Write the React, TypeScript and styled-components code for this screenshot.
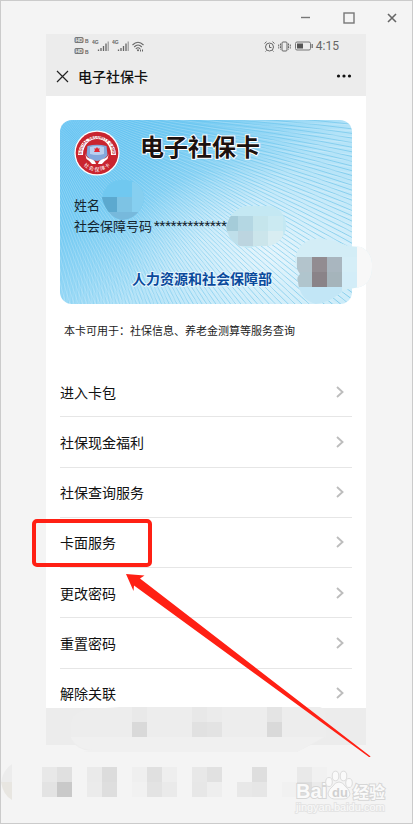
import React from "react";
import styled, { createGlobalStyle } from "styled-components";

const cjk = '"Noto Sans CJK SC", "Noto Sans", sans-serif';
const red = "#ff2014";

const GlobalStyle = createGlobalStyle`
  *, *::after { box-sizing: border-box; }
  body { margin: 0; background: #f4f4f4; font-family: ${cjk}; color: #111; }
  button { border: 0; padding: 0; background: none; font: inherit; color: inherit; cursor: pointer; }
  svg { display: block; flex: none; }
`;

const Frame = styled.div`
  position: relative;
  display: flex;
  flex-direction: column;
  min-height: 100vh;
  border: 1px solid #cbcbcb;
  background: #f4f4f4;
  overflow: hidden;
`;

const TitleBar = styled.div`
  display: flex;
  justify-content: flex-end;
  align-items: center;
  gap: 23px;
  height: 33px;
  padding-right: 10px;
`;

const WindowButton = styled.button`
  display: grid;
  place-items: center;
  width: 20px;
  height: 20px;
`;

const Phone = styled.main`
  margin: 0 46px 0 45px;
  background: #fff;
`;

const TopBar = styled.header`
  background: #ececec;
`;

const StatusBar = styled.div`
  display: flex;
  align-items: center;
  justify-content: space-between;
  height: 24px;
  padding: 0 27px 0 28px;
`;

const StatusGroup = styled.div`
  display: flex;
  align-items: center;
  gap: 3px;
  font: 12px/24px Roboto, sans-serif;
  color: #666;
`;

const NavBar = styled.nav`
  display: flex;
  align-items: center;
  gap: 9px;
  height: 38px;
  padding: 0 14px 2px 10px;
`;

const NavTitle = styled.h1`
  flex: 1;
  margin: 0;
  font-size: 14px;
  line-height: 20px;
  font-weight: 500;
`;

const Body = styled.div`
  padding: 24px 14px 0;
`;

const Card = styled.section`
  position: relative;
  isolation: isolate;
  padding: 10px 14px 16px;
`;

const CardArt = styled.svg`
  position: absolute;
  inset: 0;
  z-index: -1;
  width: 100%;
  height: 100%;
  border-radius: 12px;
`;

const CardHead = styled.div`
  display: flex;
  align-items: center;
  gap: 20px;
  height: 46px;
  margin-bottom: 18px;
`;

const CardTitle = styled.h2`
  margin: 0;
  align-self: flex-start;
  font-size: 24px;
  line-height: 32px;
  font-weight: 700;
  color: #1c1210;
  paint-order: stroke fill;
  -webkit-text-stroke: 2px #fff;
`;

const CardLine = styled.div`
  display: flex;
  gap: 2px;
  font-size: 13px;
  line-height: 21px;
  color: #14242e;
`;

const Masked = styled.span`
  font-family: Roboto, sans-serif;
`;

const Issuer = styled.div`
  margin-top: 32px;
  padding-right: 8px;
  font-size: 14px;
  line-height: 20px;
  font-weight: 700;
  text-align: center;
  color: #0a4a9c;
  paint-order: stroke fill;
  -webkit-text-stroke: 2px #e6f6fd;
`;

const Smudge = styled.svg<{ $left?: number; $right?: number; $top: number }>`
  position: absolute;
  top: ${(p) => p.$top}px;
  ${(p) => (p.$right !== undefined ? `right: ${p.$right}px;` : `left: ${p.$left}px;`)}
`;

const Note = styled.p`
  margin: 16px 0 27px;
  padding-left: 4px;
  font-size: 11px;
  line-height: 20px;
  color: #222;
`;

const Menu = styled.ul`
  display: grid;
  grid-auto-rows: 1fr;
  min-height: 352px;
  margin: 0;
  padding: 0;
  list-style: none;
`;

const MenuItem = styled.li<{ $marked?: boolean }>`
  position: relative;
  border-bottom: 1px solid #e6e6e6;
  ${(p) =>
    p.$marked &&
    `&::after {
      content: "";
      position: absolute;
      inset: 1px auto 0 -28px;
      width: 120px;
      border: 4px solid ${red};
      border-radius: 5px;
      pointer-events: none;
    }`}
`;

const MenuButton = styled.button`
  display: flex;
  align-items: center;
  justify-content: space-between;
  width: 100%;
  height: 100%;
  padding-right: 8px;
  font-size: 14px;
  line-height: 20px;
  text-align: left;
`;

const Footer = styled.footer`
  position: relative;
  height: 37px;
  margin-top: -11px;
  background: #ececec;
`;

const FooterSmudge = styled.svg`
  position: absolute;
  top: -1px;
  left: 24px;
`;

const Dock = styled.div`
  display: flex;
  align-items: flex-start;
  justify-content: space-between;
  padding: 18px 27px 10px 0;
`;

const Watermark = styled.svg`
  position: absolute;
  right: 24px;
  bottom: 6px;
`;

const Arrow = styled.svg`
  position: absolute;
  top: 572px;
  left: 125px;
  pointer-events: none;
`;

const fan = (ox: number, oy: number, from: number, to: number, step: number, bend: number) => {
  let d = "";
  for (let a = from; a < to; a += step) {
    const c = Math.cos(a);
    const s = Math.sin(a);
    const mx = ox + c * 190 - s * bend;
    const my = oy + s * 190 + c * bend;
    d += `M${(ox + c * 40).toFixed(1)} ${(oy + s * 40).toFixed(1)}Q${mx.toFixed(1)} ${my.toFixed(1)} ${(ox + c * 400).toFixed(1)} ${(oy + s * 400).toFixed(1)}`;
  }
  return d;
};

const Guilloche = () => (
  <CardArt viewBox="0 0 292 184" preserveAspectRatio="none" aria-hidden="true">
    <defs>
      <linearGradient id="sky" x1="0" y1="0" x2="1" y2="0.8">
        <stop offset="0" stopColor="#5cc0f2" />
        <stop offset="0.3" stopColor="#76cbf3" />
        <stop offset="0.62" stopColor="#b4e3f8" />
        <stop offset="1" stopColor="#c2e8f8" />
      </linearGradient>
      <radialGradient id="glow" cx="0.72" cy="0.72" r="0.5">
        <stop offset="0" stopColor="#fff" stopOpacity="0.6" />
        <stop offset="1" stopColor="#fff" stopOpacity="0" />
      </radialGradient>
      <linearGradient id="ink" x1="0" y1="0" x2="1" y2="0.5">
        <stop offset="0.15" stopColor="#4fb8e6" stopOpacity="0" />
        <stop offset="0.5" stopColor="#4fb8e6" stopOpacity="0.4" />
        <stop offset="1" stopColor="#4ab2dc" stopOpacity="0.65" />
      </linearGradient>
    </defs>
    <rect width="292" height="184" fill="url(#sky)" />
    <rect width="292" height="184" fill="url(#glow)" />
    <path d={fan(10, -12, -0.05, 1.7, 0.016, -14)} fill="none" stroke="url(#ink)" strokeWidth="1" />
    <path d={fan(-40, -30, 0.05, 1.5, 0.018, 22)} fill="none" stroke="#fff" strokeOpacity="0.2" strokeWidth="1" />
  </CardArt>
);

const Seal = () => (
  <svg width="46" height="46" viewBox="0 0 46 46" role="img" aria-label="社会保障卡">
    <defs>
      <path id="sealTop" d="M8.500 29A15.400 15.400 0 1 1 37.500 29" />
      <path id="sealBottom" d="M5.600 29A18.600 18.600 0 0 0 40.400 29" />
    </defs>
    <circle cx="23" cy="23" r="22.600" fill="#fff" />
    <circle cx="23" cy="23" r="21.300" fill="#c9242f" />
    <path d="M4 25A19 19 0 1 1 42 25H37A14 14 0 1 0 9 25Z" fill="#fff" />
    <circle cx="23" cy="22.500" r="13.500" fill="#c9242f" />
    <text fontFamily="Liberation Sans, sans-serif" fontSize="4" fontWeight="700" fill="#b8232e">
      <textPath href="#sealTop" startOffset="50%" textAnchor="middle">SOCIAL SECURITY CARD</textPath>
    </text>
    <text fontFamily="Noto Sans CJK SC, sans-serif" fontSize="5" fill="#fff">
      <textPath href="#sealBottom" startOffset="50%" textAnchor="middle">社 会 保 障 卡</textPath>
    </text>
    <path d="M13.500 16Q23 13.500 32.500 16L33.500 25Q31 30 23 31Q15 30 12.500 25Z" fill="#83a8dc" />
    <path d="M16 17Q23 15 30 17L30 24Q23 26 16 24Z" fill="#b9d0f0" />
    <path d="M11 23Q12 28 17 29Q21 30 22 34H18Q16 31 12.500 29ZM35 23Q34 28 29 29Q25 30 24 34H28Q30 31 33.500 29Z" fill="#fff" />
    <path d="M23 17L24 18.600L26 18.400L25 20L26 22H20L21 20L20 18.400L22 18.600Z" fill="#e32832" />
  </svg>
);

const blocks = (cells: [number, number, string][]) =>
  cells.map(([x, y, c]) => <rect key={`${x}-${y}`} x={x} y={y} width="15" height="15" fill={c} />);

const Signal = () => (
  <svg width="17" height="14" viewBox="0 0 17 14" aria-hidden="true">
    <text x="0" y="5" fontFamily="Liberation Sans, sans-serif" fontSize="5" fontWeight="700" fill="#666">4G</text>
    <path d="M6.500 12v-1.500M9 12V9M11.500 12V7M14 12V4.500" stroke="#666" strokeWidth="1.300" />
    <path d="M16.200 12V2.500" stroke="#999" strokeWidth="1.200" />
  </svg>
);

const Chevron = () => (
  <svg width="8" height="12" viewBox="0 0 8 12" aria-hidden="true">
    <path d="M1 1L6.500 6L1 11" fill="none" stroke="#bdbdbd" strokeWidth="1.900" />
  </svg>
);

const items = ["进入卡包", "社保现金福利", "社保查询服务", "卡面服务", "更改密码", "重置密码", "解除关联"];

export default function App() {
  return (
    <>
      <GlobalStyle />
      <Frame>
        <TitleBar>
          <WindowButton aria-label="最小化">
            <svg width="10" height="10"><path d="M0 4.500H9" stroke="#777" strokeWidth="1.400" /></svg>
          </WindowButton>
          <WindowButton aria-label="最大化">
            <svg width="12" height="12"><rect x="1" y="1" width="10" height="10" fill="none" stroke="#777" strokeWidth="1.400" /></svg>
          </WindowButton>
          <WindowButton aria-label="关闭">
            <svg width="10" height="10"><path d="M1 1L9 9M9 1L1 9" stroke="#666" strokeWidth="1.600" /></svg>
          </WindowButton>
        </TitleBar>

        <Phone>
          <TopBar>
            <StatusBar>
              <StatusGroup>
                <svg width="15" height="20" viewBox="0 0 15 20" aria-hidden="true">
                  <rect x="0.500" y="1" width="9" height="6" rx="1.500" fill="#777" />
                  <rect x="0.500" y="12" width="9" height="6" rx="1.500" fill="#777" />
                  <g fontFamily="Liberation Sans, sans-serif" fontSize="5" fontWeight="700">
                    <text x="1.500" y="6" fill="#eee">HD</text>
                    <text x="1.500" y="17" fill="#eee">HD</text>
                    <text x="11" y="7" fill="#666">B</text>
                    <text x="11" y="18" fill="#666">B</text>
                  </g>
                </svg>
                <Signal />
                <Signal />
                <svg width="12" height="11" viewBox="0 0 12 11" aria-hidden="true">
                  <g fill="none" stroke="#666" strokeWidth="1.100">
                    <path d="M0.500 4Q6 -1.500 11.500 4" />
                    <path d="M2.200 6Q6 2 9.800 6" />
                    <path d="M3.800 8Q6 5.500 8.200 8" />
                  </g>
                  <circle cx="6" cy="9.300" r="1" fill="#666" />
                  <path d="M8.500 8.500V10.500M10.500 8.500V10.500" stroke="#666" />
                </svg>
              </StatusGroup>
              <StatusGroup>
                <svg width="11" height="11" viewBox="0 0 11 11" fill="none" stroke="#666" aria-hidden="true">
                  <circle cx="5.500" cy="6" r="4" />
                  <path d="M5.500 3.500V6.500H7.500M0.500 2.500L2.500 0.700M10.500 2.500L8.500 0.700M2.500 9.500L1.500 10.500M8.500 9.500L9.500 10.500" />
                </svg>
                <svg width="13" height="11" viewBox="0 0 13 11" fill="none" stroke="#666" aria-hidden="true">
                  <rect x="4" y="1" width="5" height="9" rx="1" />
                  <path d="M2.500 2.500V8.500M10.500 2.500V8.500M0.700 3.500V7.500M12.300 3.500V7.500" strokeDasharray="2 0.700" />
                </svg>
                <svg width="19" height="10" viewBox="0 0 19 10" aria-hidden="true">
                  <rect x="1.500" y="1" width="15" height="8" rx="1.500" fill="none" stroke="#777" />
                  <rect x="3" y="2.500" width="6" height="5" fill="#555" />
                  <path d="M18.200 3V7" stroke="#666" strokeWidth="1.200" />
                </svg>
                <span>4:15</span>
              </StatusGroup>
            </StatusBar>
            <NavBar>
              <button aria-label="关闭页面">
                <svg width="13" height="13"><path d="M1 1L12 12M12 1L1 12" stroke="#222" strokeWidth="1.200" /></svg>
              </button>
              <NavTitle>电子社保卡</NavTitle>
              <button aria-label="更多">
                <svg width="16" height="6" fill="#111"><circle cx="2.500" cy="3" r="1.600" /><circle cx="8" cy="3" r="1.600" /><circle cx="13.500" cy="3" r="1.600" /></svg>
              </button>
            </NavBar>
          </TopBar>

          <Body>
            <Card>
              <Guilloche />
              <CardHead>
                <Seal />
                <CardTitle>电子社保卡</CardTitle>
              </CardHead>
              <CardLine>姓名</CardLine>
              <CardLine>
                <span>社会保障号码</span>
                <Masked>*************</Masked>
              </CardLine>
              <Issuer>人力资源和社会保障部</Issuer>

              <Smudge $left={41} $top={59} width="44" height="42" aria-hidden="true">
                <clipPath id="blobName"><path d="M1 19Q3 6 14 2Q30 -2 39 8Q47 18 40 29Q34 40 21 41Q6 38 1 19Z" /></clipPath>
                <g clipPath="url(#blobName)">
                  <rect width="44" height="42" fill="#70c8f0" />
                  <rect x="31" y="3" width="13" height="39" fill="#86cff0" />
                  <rect y="18" width="16" height="15" fill="#5ca9cf" />
                  <rect x="16" y="18" width="15" height="15" fill="#7dc3e4" />
                  <rect y="33" width="44" height="9" fill="#77b9dc" />
                </g>
              </Smudge>
              <Smudge $left={166} $top={85} width="61" height="44" aria-hidden="true">
                <clipPath id="blobNumber"><path d="M0 22Q5 4 20 1H45Q61 6 60 23Q57 38 42 41Q30 40 24 43Q4 42 0 22Z" /></clipPath>
                <g clipPath="url(#blobNumber)">
                  <rect width="61" height="44" fill="#c4e8f3" />
                  {blocks([[-3, 11, "#a5ccd9"], [12, 11, "#b4d7e3"], [27, 11, "#c5e5ec"], [42, 11, "#cbeaf2"], [-3, 26, "#bfdfea"], [12, 26, "#bcd5e0"], [27, 26, "#cbe5eb"], [42, 26, "#d8edf2"]])}
                </g>
              </Smudge>
              <Smudge $right={-20} $top={116} width="77" height="68" aria-hidden="true">
                <clipPath id="blobCode"><path d="M0 24Q2 4 25 2Q42 5 53 10L66 11Q78 17 77 31Q77 47 65 51L49 54Q36 66 21 68Q5 64 3 46Q1 42 5 38Q1 33 0 24Z" /></clipPath>
                <g clipPath="url(#blobCode)">
                  <rect width="77" height="68" fill="#d3edf6" />
                  <rect x="62" width="15" height="68" fill="#f8f8f8" />
                  <rect y="51" width="47" height="17" fill="#c2e6f6" />
                  {blocks([[2, 21, "#b3c4cc"], [17, 21, "#928c91"], [32, 21, "#a9b6bf"], [2, 36, "#b0c5cd"], [17, 36, "#8a8388"], [32, 36, "#a5b4bb"], [47, 21, "#d5eef7"], [47, 36, "#d3edf8"]])}
                </g>
              </Smudge>
            </Card>
            <Note>本卡可用于：社保信息、养老金测算等服务查询</Note>
            <Menu>
              {items.map((label) => (
                <MenuItem key={label} $marked={label === "卡面服务"}>
                  <MenuButton>
                    {label}
                    <Chevron />
                  </MenuButton>
                </MenuItem>
              ))}
            </Menu>
          </Body>
          <Footer>
            <FooterSmudge width="256" height="46" aria-hidden="true">
              <path d="M1 20Q0 5 20 2L50 0H250Q256 1 256 12V30L227 45H14L22 44Q6 43 1 32Z" fill="#ededed" />
              <path d="M1 30H254L227 45H14L22 43Q6 42 1 30Z" fill="#f0f0f0" />
              {blocks([[62, 0, "#e9e9e9"], [62, 15, "#d9d9d9"], [122, 0, "#e8e8e8"], [137, 0, "#ebebeb"], [122, 15, "#e1e1e1"], [137, 15, "#e3e3e3"], [197, 0, "#e4e4e4"], [197, 15, "#d9d9d9"]])}
            </FooterSmudge>
          </Footer>
        </Phone>

        <Dock>
          <svg width="330" height="42" aria-hidden="true">
            <path d="M11 1Q2 7 0 19H11Z" fill="#ececec" />
            <path d="M0 19H11V37Q2 32 0 19Z" fill="#e8e6e1" />
            {blocks([
              [41, 4, "#e8e8e8"], [56, 4, "#e0e0e0"], [41, 19, "#e3e3e3"], [56, 19, "#c9c9c9"],
              [86, 4, "#eaeaea"], [101, 4, "#dcdcdc"], [86, 19, "#ebebeb"], [101, 19, "#dedede"],
              [131, 4, "#efefef"], [146, 4, "#e0e0e0"], [161, 4, "#eeeeee"], [131, 19, "#f1f1f1"], [146, 19, "#e3e3e3"], [161, 19, "#eaeaea"],
              [191, 4, "#e8e8e8"], [206, 4, "#e1e1e1"], [191, 19, "#e7e7e7"], [206, 19, "#eeeeee"],
              [251, 4, "#dedede"], [236, 19, "#e8e8e8"], [251, 19, "#e6e6e6"],
              [296, 4, "#e9e9e9"], [311, 4, "#f1f1f1"], [281, 19, "#f1f1f1"], [296, 19, "#dedede"], [311, 19, "#ebebeb"],
            ])}
          </svg>
        </Dock>

        <Watermark width="96" height="50" viewBox="0 0 96 50" role="img" aria-label="Baidu 经验">
          <g fill="#fafafa" stroke="#d6d6d6" strokeWidth="2" paintOrder="stroke" fontFamily="Liberation Sans, sans-serif" fontWeight="700">
            <text x="4" y="31" fontSize="20">Bai</text>
            <text x="61" y="31" fontSize="16" fontFamily="Noto Sans CJK SC, sans-serif">经验</text>
            <text x="4" y="44" fontSize="11" fontWeight="400" stroke="#e4e4e4">jingyan.baidu.com</text>
          </g>
          <g fill="#fafafa" stroke="#dcdcdc">
            <ellipse cx="37" cy="15" rx="3.300" ry="4.500" />
            <ellipse cx="43.500" cy="9" rx="3.300" ry="4.800" />
            <ellipse cx="51.500" cy="9" rx="3.300" ry="4.800" />
            <ellipse cx="57" cy="16" rx="3.300" ry="4.500" />
            <path d="M47 15Q51 15 53 19Q58 23 58 27Q57 32 51 32H42Q36 31 36 26Q37 22 41 19Q43 15 47 15Z" />
          </g>
          <text x="40" y="30" fontFamily="Liberation Sans, sans-serif" fontSize="13" fontWeight="700" fill="#d0d0d0">du</text>
        </Watermark>

        <Arrow width="248" height="188" aria-hidden="true">
          <path d="M0 1L18.500 2.500L14 5.500L244 183L244.500 184L243 184L8 12.500L7.500 18Z" fill={red} />
        </Arrow>
      </Frame>
    </>
  );
}
